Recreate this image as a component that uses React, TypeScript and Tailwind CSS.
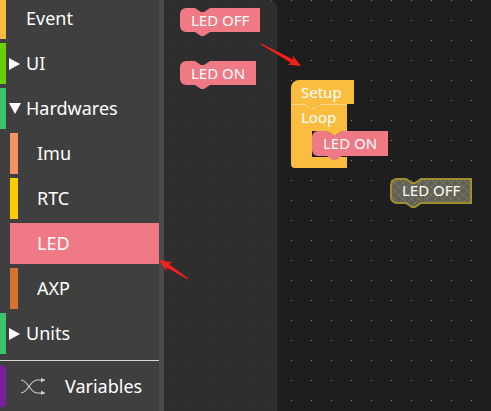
import React from 'react';
import clsx from 'clsx';

const font = { fontFamily: '"Noto Sans", "Open Sans", sans-serif' };

const blockPath = (w: number, h: number) =>
  `M0,6 A6,6 0 0 1 6,0 H15 l6,4 h3 l6,-4 H${w} V${h} H30 l-6,4 h-3 l-6,-4 H6 A6,6 0 0 1 0,${h - 6} Z`;

type BlockProps = {
  w: number;
  h?: number;
  text: string;
  className?: string;
  ghost?: boolean;
};

const Block: React.FC<BlockProps> = ({ w, h = 24, text, className, ghost }) => (
  <div className={className}>
    <div className="relative h-full w-full">
      <svg className="absolute left-0 top-0 overflow-visible" width={w} height={h + 5}>
        {ghost && (
          <defs>
            <pattern id="hatch" width="8" height="8" patternUnits="userSpaceOnUse">
              <path d="M0,0 L8,8 M8,0 L0,8" stroke="#8a8032" strokeWidth="0.7" />
            </pattern>
          </defs>
        )}
        <path d={blockPath(w, h)} fill={ghost ? '#606060' : '#ef7985'} />
        {ghost && (
          <path d={blockPath(w, h)} fill="url(#hatch)" stroke="#a08d2e" strokeWidth="2" />
        )}
      </svg>
      <div className="relative flex h-full items-center pl-[11px] text-[15px] leading-none text-white">
        {text}
      </div>
    </div>
  </div>
);

const Arrow: React.FC<{ tail: [number, number]; tip: [number, number] }> = ({ tail, tip }) => {
  const dx = tip[0] - tail[0];
  const dy = tip[1] - tail[1];
  const len = Math.hypot(dx, dy);
  const ux = dx / len;
  const uy = dy / len;
  const nx = -uy;
  const ny = ux;
  const base: [number, number] = [tip[0] - ux * 13, tip[1] - uy * 13];
  const neck: [number, number] = [tip[0] - ux * 10, tip[1] - uy * 10];
  const pts = [
    [tail[0] + nx * 0.5, tail[1] + ny * 0.5],
    [neck[0] + nx * 2, neck[1] + ny * 2],
    [base[0] + nx * 5.5, base[1] + ny * 5.5],
    tip,
    [base[0] - nx * 5.5, base[1] - ny * 5.5],
    [neck[0] - nx * 2, neck[1] - ny * 2],
    [tail[0] - nx * 0.5, tail[1] - ny * 0.5],
  ]
    .map(p => `${p[0]},${p[1]}`)
    .join(' ');
  return <polygon points={pts} fill="#f5201a" />;
};

const RightTri = () => (
  <svg width="11" height="12" viewBox="0 0 11 12">
    <polygon points="0,0 11,6 0,12" fill="#fff" />
  </svg>
);

const DownTri = () => (
  <svg width="12" height="11" viewBox="0 0 12 11">
    <polygon points="0,0 12,0 6,11" fill="#fff" />
  </svg>
);

const TopRow: React.FC<{ color: string; label: string; tri?: 'right' | 'down' }> = ({ color, label, tri }) => (
  <div className="flex h-[41px] items-center">
    <div className={clsx('h-full w-[6px]', color)} />
    <div className="flex w-[20px] items-center pl-[3px]">
      {tri === 'right' && <RightTri />}
      {tri === 'down' && <DownTri />}
    </div>
    <span className="text-[18px] text-white">{label}</span>
  </div>
);

const SubRow: React.FC<{ color: string; label: string; selected?: boolean }> = ({ color, label, selected }) => (
  <div className={clsx('ml-[10px] flex h-[41px] items-center', selected && 'bg-[#ef7985]')}>
    <div className={clsx('h-full w-[8px]', color)} />
    <span className="pl-[19px] text-[18px] text-white">{label}</span>
  </div>
);

const App: React.FC = () => {
  return (
    <div className="relative flex h-screen w-full overflow-hidden bg-[#1e1e1e]" style={font}>
      {/* Toolbox */}
      <div className="flex w-[159px] flex-col gap-[4px] bg-[#3f3f3f] pt-0">
        <div className="-mt-[2px] flex flex-col gap-[4px]">
          <TopRow color="bg-[#fbbd3f]" label="Event" />
          <TopRow color="bg-[#6ad000]" label="UI" tri="right" />
          <TopRow color="bg-[#3cc46a]" label="Hardwares" tri="down" />
          <SubRow color="bg-[#f7935f]" label="Imu" />
          <SubRow color="bg-[#ffcc00]" label="RTC" />
          <SubRow color="bg-[#ef7985]" label="LED" selected />
          <SubRow color="bg-[#d7722d]" label="AXP" />
          <TopRow color="bg-[#3cc46a]" label="Units" tri="right" />
        </div>
        <div className="mt-[2px] h-px bg-[#d8d8d8]" />
        <div className="mt-[1px] flex h-[41px] items-center">
          <div className="h-full w-[6px] bg-[#7b1f9e]" />
          <svg className="ml-[14px]" width="27" height="17" viewBox="0 0 27 17" fill="none">
            <path d="M1,2 C8,2 10,15 17,15 H25" stroke="#cfcfcf" strokeWidth="1.1" />
            <path d="M1,15 C8,15 10,2 17,2 H25" stroke="#cfcfcf" strokeWidth="1.1" />
            <path d="M21,0 L25,2 L21,4.5 Z M21,12.5 L25,15 L21,17 Z" fill="#cfcfcf" />
          </svg>
          <span className="pl-[18px] text-[18px] text-white">Variables</span>
        </div>
      </div>

      {/* Scrollbar */}
      <div className="w-[5px] bg-[#4b4b4b]" />

      {/* Workspace */}
      <div className="relative flex-1">
        <svg className="absolute inset-0 h-full w-full">
          <defs>
            <pattern id="grid" x="7" y="0" width="20" height="20" patternUnits="userSpaceOnUse">
              <rect width="1" height="1" fill="#868686" />
            </pattern>
          </defs>
          <rect width="100%" height="100%" fill="url(#grid)" />
        </svg>

        {/* Flyout */}
        <div className="absolute inset-y-0 left-0 flex w-[113px] flex-col gap-[29px] rounded-tr-[8px] bg-[#343434]/74 pl-[16px] pt-[8px]">
          <Block w={80} text="LED OFF" className="h-[24px] w-[80px]" />
          <Block w={76} text="LED ON" className="h-[24px] w-[76px]" />
        </div>

        {/* Setup / Loop */}
        <div className="absolute left-[127px] top-[80px] h-[88px] w-[100px]">
          <svg className="absolute left-0 top-0 overflow-visible" width="64" height="89">
            <path
              d="M0,24 H15 l6,4 h3 l6,-4 H56 V51 H51 l-6,4 h-3 l-6,-4 H21 V77 H56 V88 H4 A4,4 0 0 1 0,84 Z"
              fill="#fbbd3f"
            />
            <path d="M0,8 A8,8 0 0 1 8,0 H63 V24 H30 l-6,4 h-3 l-6,-4 H0 Z" fill="#fbbd3f" />
            <path d="M0,24.5 H15 l6,4 h3 l6,-4 H56" stroke="#fdd68a" strokeWidth="1" fill="none" />
          </svg>
          <div className="relative flex h-[24px] items-center pl-[10px] text-[15px] leading-none text-white">Setup</div>
          <div className="relative flex h-[27px] items-center pl-[10px] text-[15px] leading-none text-white">Loop</div>
          <Block w={76} h={25} text="LED ON" className="ml-[21px] h-[25px] w-[76px]" />
        </div>

        {/* Dragged ghost block */}
        <Block w={80} text="LED OFF" ghost className="absolute left-[227px] top-[179px] h-[23px] w-[80px]" />
      </div>

      {/* Annotation arrows */}
      <svg className="pointer-events-none absolute inset-0 h-full w-full">
        <Arrow tail={[261, 44]} tip={[301, 66]} />
        <Arrow tail={[188, 279]} tip={[159, 260]} />
      </svg>
    </div>
  );
};

export default App;
